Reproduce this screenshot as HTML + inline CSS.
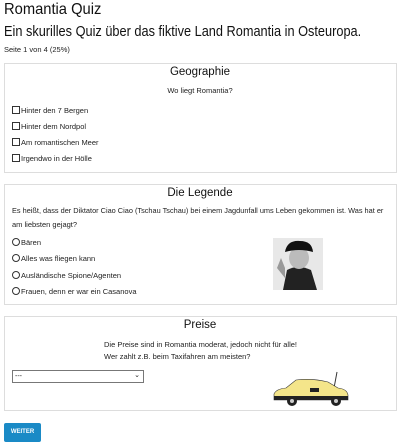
<!DOCTYPE html><html><head><meta charset="utf-8"><style>
body{margin:0;width:400px;height:446px;background:#fff;font-family:"Liberation Sans",sans-serif;color:#222;position:relative;overflow:hidden}
.a{position:absolute;white-space:nowrap}
.box{position:absolute;left:4px;width:391px;border:1px solid #ddd;background:#fff}
.h{font-size:11.5px;color:#111}
.s{font-size:7.5px;color:#222}
.cb{display:inline-block;width:6px;height:6px;border:1px solid #333;margin-right:1px;vertical-align:-1px}
.rb{display:inline-block;width:6px;height:6px;border:1px solid #333;border-radius:50%;margin-right:1px;vertical-align:-1px}
</style></head><body>
<div class="a" style="left:4px;top:1px;font-size:16px;color:#111;transform:scaleX(0.92);transform-origin:0 0">Romantia Quiz</div>
<div class="a" style="left:4px;top:23px;font-size:15px;color:#111;transform:scaleX(0.85);transform-origin:0 0">Ein skurilles Quiz über das fiktive Land Romantia in Osteuropa.</div>
<div class="a s" style="left:4px;top:45px">Seite 1 von 4 (25%)</div>

<div class="box" style="top:63px;height:108px"></div>
<div class="a h" style="left:0;width:400px;text-align:center;top:66px">Geographie</div>
<div class="a s" style="left:0;width:400px;text-align:center;top:86px">Wo liegt Romantia?</div>
<div class="a s" style="left:12px;top:106px"><span class="cb"></span>Hinter den 7 Bergen</div>
<div class="a s" style="left:12px;top:122px"><span class="cb"></span>Hinter dem Nordpol</div>
<div class="a s" style="left:12px;top:138px"><span class="cb"></span>Am romantischen Meer</div>
<div class="a s" style="left:12px;top:154px"><span class="cb"></span>Irgendwo in der Hölle</div>

<div class="box" style="top:184px;height:119px"></div>
<div class="a h" style="left:0;width:400px;text-align:center;top:187px">Die Legende</div>
<div class="a s" style="left:12px;top:206px;transform:scaleX(0.98);transform-origin:0 0">Es heißt, dass der Diktator Ciao Ciao (Tschau Tschau) bei einem Jagdunfall ums Leben gekommen ist. Was hat er</div>
<div class="a s" style="left:12px;top:220px">am liebsten gejagt?</div>
<div class="a s" style="left:12px;top:238px"><span class="rb"></span>Bären</div>
<div class="a s" style="left:12px;top:254px"><span class="rb"></span>Alles was fliegen kann</div>
<div class="a s" style="left:12px;top:271px"><span class="rb"></span>Ausländische Spione/Agenten</div>
<div class="a s" style="left:12px;top:287px"><span class="rb"></span>Frauen, denn er war ein Casanova</div>
<svg class="a" style="left:273px;top:238px" width="50" height="52" viewBox="0 0 50 52">
<rect width="50" height="52" fill="#e8e8e8"/>
<path d="M10 52 L14 32 Q25 26 38 32 L44 52Z" fill="#222"/>
<ellipse cx="26" cy="20" rx="10" ry="11" fill="#bbb"/>
<path d="M12 14 Q14 2 27 3 Q39 3 40 14 Q26 10 12 14Z" fill="#111"/>
<path d="M4 30 L8 20 L12 30 L12 40Z" fill="#999"/>
</svg>

<div class="box" style="top:316px;height:93px"></div>
<div class="a h" style="left:0;width:400px;text-align:center;top:319px">Preise</div>
<div class="a s" style="left:104px;top:340px">Die Preise sind in Romantia moderat, jedoch nicht für alle!</div>
<div class="a s" style="left:104px;top:352px">Wer zahlt z.B. beim Taxifahren am meisten?</div>
<div class="a" style="left:12px;top:370px;width:130px;height:11px;border:1px solid #777;font-size:7px;line-height:11px"><span style="margin-left:2px">---</span><span style="position:absolute;right:3px;top:-1px;font-size:7px">⌄</span></div>
<svg class="a" style="left:272px;top:370px" width="80" height="40" viewBox="0 0 80 40">
<line x1="62" y1="18" x2="65" y2="2" stroke="#333"/>
<path d="M2 24 Q4 19 14 18 L24 10 Q40 8 56 12 L66 18 Q75 19 76 25 L76 30 L2 30Z" fill="#f4e58a" stroke="#333" stroke-width=".6"/>
<rect x="2" y="26" width="74" height="4" fill="#222"/>
<rect x="38" y="18" width="9" height="4" fill="#222"/>
<circle cx="20" cy="31" r="5" fill="#222"/><circle cx="20" cy="31" r="2" fill="#ccc"/>
<circle cx="64" cy="31" r="5" fill="#222"/><circle cx="64" cy="31" r="2" fill="#ccc"/>
</svg>

<div class="a" style="left:4px;top:423px;width:37px;height:19px;background:#1a8ac6;border-radius:2px;color:#fff;font-size:6px;font-weight:bold;text-align:center;line-height:19px">WEITER</div>
</body></html>
